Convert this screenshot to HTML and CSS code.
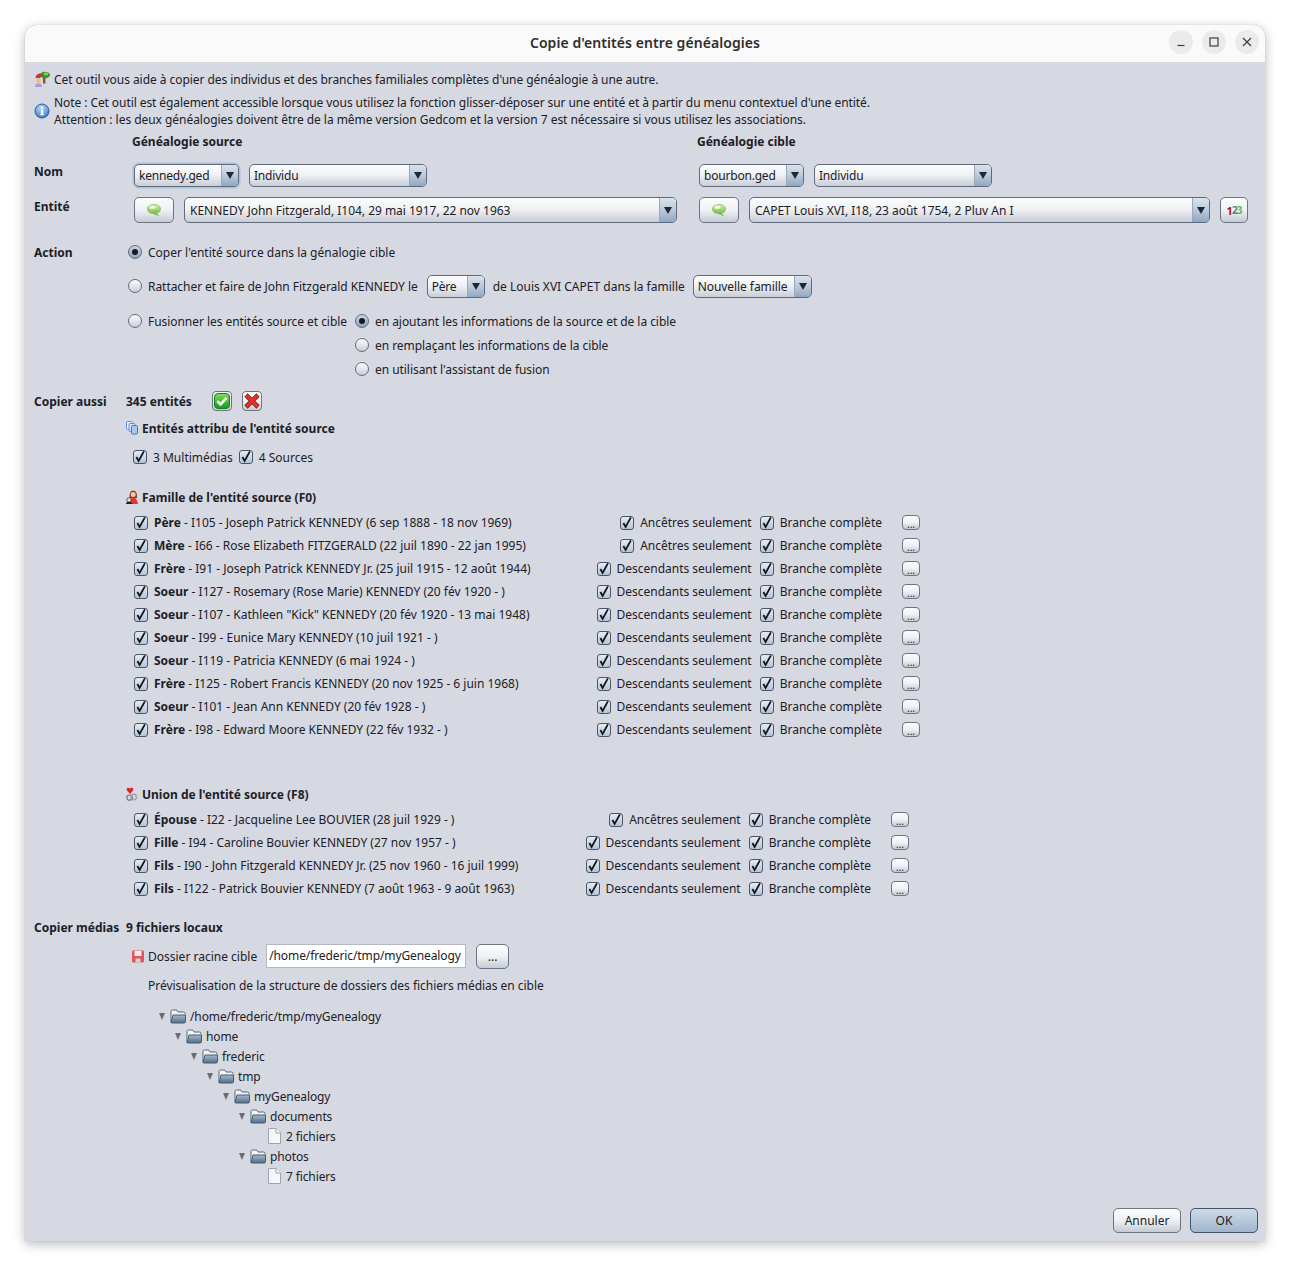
FILE: index.html
```html
<!DOCTYPE html>
<html lang="fr">
<head>
<meta charset="utf-8">
<title>Copie d'entités entre généalogies</title>
<link rel="stylesheet" href="styles.css">
</head>
<body>
<svg class="sprite" aria-hidden="true">
  <defs>
    <linearGradient id="gFolder" x1="0" y1="0" x2="0" y2="1"><stop offset="0" stop-color="#a9bccf"/><stop offset="1" stop-color="#4f6c8c"/></linearGradient>
    <linearGradient id="gGreen" x1="0" y1="0" x2="0" y2="1"><stop offset="0" stop-color="#7fe05a"/><stop offset="1" stop-color="#159a1c"/></linearGradient>
    <linearGradient id="gBubble" x1="0" y1="0" x2="0" y2="1"><stop offset="0" stop-color="#d5f0a8"/><stop offset="1" stop-color="#63b23a"/></linearGradient>
    <radialGradient id="gInfo" cx=".45" cy=".3" r=".75"><stop offset="0" stop-color="#c3dcf6"/><stop offset=".6" stop-color="#6d9fdc"/><stop offset="1" stop-color="#2f67b4"/></radialGradient>
    <symbol id="check" viewBox="0 0 14 14"><path d="M3.4 7 L5.6 11 L10.9 1.4" fill="none" stroke="#10151c" stroke-width="1.8"/></symbol>
    <symbol id="folder" viewBox="0 0 16 15"><path d="M1 13.5V2.5Q1 1 2.5 1H6Q7 1 7.5 2.2L8 3H13.5Q15 3 15 4.5V5.5" fill="#f2f4f7" stroke="#5d6875"/><path d="M1 13.5L3 6H15.5V12.5Q15.5 14 14 14H2Z" fill="url(#gFolder)" stroke="#4a5a6c"/></symbol>
    <symbol id="file" viewBox="0 0 14 16"><path d="M1.5 .5H9L13.5 5V15.5H1.5Z" fill="#f5f6f8" stroke="#9da3ad"/><path d="M9 .5V5H13.5" fill="#fff" stroke="#9da3ad"/></symbol>
    <symbol id="bubble" viewBox="0 0 14 12"><path d="M7 .5C10.5.5 13.5 2.2 13.5 5S11.5 9 9 9.2L11.5 11.5 6 9.5C3 9.3.5 8 .5 5S3.5.5 7 .5Z" fill="url(#gBubble)" stroke="#6db24b" stroke-width=".6"/><ellipse cx="5.5" cy="3.2" rx="3" ry="1.5" fill="#f2fbdf"/></symbol>
  </defs>
</svg>

<div class="window">
  <header class="titlebar">
    <h1 class="title">Copie d'entités entre généalogies</h1>
    <div class="winbtns">
      <span class="winbtn"><svg width="10" height="10" viewBox="0 0 10 10"><path d="M1.5 8.5H8.5" stroke="#3d3d3d" stroke-width="1.2"/></svg></span>
      <span class="winbtn"><svg width="10" height="10" viewBox="0 0 10 10"><rect x="1" y="1" width="8" height="8" fill="none" stroke="#3d3d3d" stroke-width="1.2"/></svg></span>
      <span class="winbtn"><svg width="10" height="10" viewBox="0 0 10 10"><path d="M1 1L9 9M9 1L1 9" stroke="#3d3d3d" stroke-width="1.2"/></svg></span>
    </div>
  </header>

  <main class="content">
    <div class="intro">
      <svg class="ico16" viewBox="0 0 16 16"><rect x="9" y="6.5" width="2.4" height="6" fill="#7a5a2c"/><ellipse cx="11" cy="4" rx="5" ry="3.3" fill="#3c8f2e"/><ellipse cx="12" cy="3" rx="2.4" ry="1.4" fill="#8acb5f"/><path d="M1.5 7Q2 2.5 6 2.5 8 2.6 8 4.5L6 7Z" fill="#c8362c"/><circle cx="4.5" cy="9.6" r="2.4" fill="#eeb98f"/><path d="M1 16Q1 12.2 4.5 12.2T8 16Z" fill="#b09ad0"/></svg>
      <span class="t-intro">Cet outil vous aide à copier des individus et des branches familiales complètes d'une généalogie à une autre.</span>
    </div>
    <div class="note">
      <svg class="ico16" viewBox="0 0 16 16"><circle cx="8" cy="8" r="7" fill="url(#gInfo)" stroke="#2f5f9e"/><rect x="7" y="6.8" width="2.2" height="5.2" fill="#fff"/><rect x="6.2" y="11" width="3.8" height="1.2" fill="#fff"/><circle cx="8" cy="4.6" r="1.2" fill="#fff"/></svg>
      <p class="note-text"><span class="t-note1">Note : Cet outil est également accessible lorsque vous utilisez la fonction glisser-déposer sur une entité et à partir du menu contextuel d'une entité.</span><span class="t-note2">Attention : les deux généalogies doivent être de la même version Gedcom et la version 7 est nécessaire si vous utilisez les associations.</span></p>
    </div>

    <div class="gen-heads">
      <b class="gen-head">Généalogie source</b>
      <b class="gen-head">Généalogie cible</b>
    </div>

    <div class="form-row nom-row">
      <b class="lbl lbl-up">Nom</b>
      <div class="side">
        <div class="combo w105 focus"><span class="combo-text">kennedy.ged</span><span class="combo-arrow"></span></div>
        <div class="combo w178"><span class="combo-text">Individu</span><span class="combo-arrow"></span></div>
      </div>
      <div class="side">
        <div class="combo w105"><span class="combo-text">bourbon.ged</span><span class="combo-arrow"></span></div>
        <div class="combo w178"><span class="combo-text">Individu</span><span class="combo-arrow"></span></div>
      </div>
    </div>

    <div class="form-row ent-row">
      <b class="lbl lbl-up">Entité</b>
      <div class="side">
        <button class="btn btn-ent"><svg width="14" height="12"><use href="#bubble"/></svg></button>
        <div class="combo tall w493"><span class="combo-text ent">KENNEDY John Fitzgerald, I104, 29 mai 1917, 22 nov 1963</span><span class="combo-arrow"></span></div>
      </div>
      <div class="side">
        <button class="btn btn-ent"><svg width="14" height="12"><use href="#bubble"/></svg></button>
        <div class="combo tall w461"><span class="combo-text ent">CAPET Louis XVI, I18, 23 août 1754, 2 Pluv An I</span><span class="combo-arrow"></span></div>
        <button class="btn btn-num"><span class="n1">1</span><span class="n2">2</span><span class="n3">3</span></button>
      </div>
    </div>

    <section class="action">
      <b class="lbl lbl-col lbl-action">Action</b>
      <div class="action-body">
        <div class="radio-row first"><span class="radio on"></span><span>Coper l'entité source dans la génalogie cible</span></div>
        <div class="radio-row second">
          <span class="radio"></span><span class="tight">Rattacher et faire de John Fitzgerald KENNEDY le</span>
          <div class="combo w58 after-text"><span class="combo-text">Père</span><span class="combo-arrow"></span></div>
          <span>de Louis XVI CAPET dans la famille</span>
          <div class="combo w119"><span class="combo-text loose">Nouvelle famille</span><span class="combo-arrow"></span></div>
        </div>
        <div class="merge">
          <div class="radio-row"><span class="radio"></span><span class="tight">Fusionner les entités source et cible</span></div>
          <div class="merge-opts">
            <div class="radio-row"><span class="radio on"></span><span class="tight">en ajoutant les informations de la source et de la cible</span></div>
            <div class="radio-row"><span class="radio"></span><span class="tight">en remplaçant les informations de la cible</span></div>
            <div class="radio-row"><span class="radio"></span><span class="tight">en utilisant l'assistant de fusion</span></div>
          </div>
        </div>
      </div>
    </section>

    <div class="copy-head">
      <b class="lbl lbl-col">Copier aussi</b>
      <b class="count">345 entités</b>
      <button class="btn btn-sq"><svg width="16" height="16" viewBox="0 0 16 16"><rect x=".5" y=".5" width="15" height="15" rx="3.5" fill="url(#gGreen)" stroke="#1b7f20"/><path d="M3.4 8.2L6.6 11.4 12.6 4.8" fill="none" stroke="#fff" stroke-width="2.6"/></svg></button>
      <button class="btn btn-sq"><svg width="16" height="16" viewBox="0 0 16 16"><path d="M2 2L14 14M14 2L2 14" stroke="#7d1713" stroke-width="4.6"/><path d="M2.4 2.4L13.6 13.6M13.6 2.4L2.4 13.6" stroke="#e0332b" stroke-width="3.2"/></svg></button>
    </div>

    <h2 class="group g-attr"><svg class="ico12" viewBox="0 0 12 14"><rect x=".5" y=".5" width="6" height="8" rx="1" fill="#e4eefc" stroke="#5f93d8"/><rect x="3" y="2.5" width="6" height="8" rx="1" fill="#d3e3f9" stroke="#5f93d8"/><rect x="5.5" y="4.5" width="6" height="8.5" rx="1" fill="#a9c8f0" stroke="#3f78c6"/></svg>Entités attribu de l'entité source</h2>
    <div class="attr-row">
      <label class="chk"><span class="cb"><svg width="14" height="14"><use href="#check"/></svg></span>3 Multimédias</label>
      <label class="chk"><span class="cb"><svg width="14" height="14"><use href="#check"/></svg></span>4 Sources</label>
    </div>

    <h2 class="group g-fam"><svg class="ico12" viewBox="0 0 12 14"><path d="M3.6 8Q3 .5 7.2.5T11 8Z" fill="#8f3a22"/><circle cx="7.2" cy="4.4" r="2.5" fill="#f3c9a6"/><path d="M4 14Q4 7.5 7.4 7.5T12 14Z" fill="#e0362c"/><circle cx="3" cy="10" r="2.2" fill="#fbe3d6" stroke="#2c2020" stroke-width=".7"/><path d="M0 14Q0 11.8 3 11.8T6 14Z" fill="#2a1d1d"/></svg>Famille de l'entité source (F0)</h2>
    <div class="people">
      <div class="person"><label class="chk"><span class="cb"><svg width="14" height="14"><use href="#check"/></svg></span><span><b>Père</b> - I105 - Joseph Patrick KENNEDY (6 sep 1888 - 18 nov 1969)</span></label><label class="chk scope"><span class="cb"><svg width="14" height="14"><use href="#check"/></svg></span>Ancêtres seulement</label><label class="chk branch"><span class="cb"><svg width="14" height="14"><use href="#check"/></svg></span>Branche complète</label><button class="btn btn-more">...</button></div>
      <div class="person"><label class="chk"><span class="cb"><svg width="14" height="14"><use href="#check"/></svg></span><span><b>Mère</b> - I66 - Rose Elizabeth FITZGERALD (22 juil 1890 - 22 jan 1995)</span></label><label class="chk scope"><span class="cb"><svg width="14" height="14"><use href="#check"/></svg></span>Ancêtres seulement</label><label class="chk branch"><span class="cb"><svg width="14" height="14"><use href="#check"/></svg></span>Branche complète</label><button class="btn btn-more">...</button></div>
      <div class="person"><label class="chk"><span class="cb"><svg width="14" height="14"><use href="#check"/></svg></span><span><b>Frère</b> - I91 - Joseph Patrick KENNEDY Jr. (25 juil 1915 - 12 août 1944)</span></label><label class="chk scope"><span class="cb"><svg width="14" height="14"><use href="#check"/></svg></span>Descendants seulement</label><label class="chk branch"><span class="cb"><svg width="14" height="14"><use href="#check"/></svg></span>Branche complète</label><button class="btn btn-more">...</button></div>
      <div class="person"><label class="chk"><span class="cb"><svg width="14" height="14"><use href="#check"/></svg></span><span><b>Soeur</b> - I127 - Rosemary (Rose Marie) KENNEDY (20 fév 1920 - )</span></label><label class="chk scope"><span class="cb"><svg width="14" height="14"><use href="#check"/></svg></span>Descendants seulement</label><label class="chk branch"><span class="cb"><svg width="14" height="14"><use href="#check"/></svg></span>Branche complète</label><button class="btn btn-more">...</button></div>
      <div class="person"><label class="chk"><span class="cb"><svg width="14" height="14"><use href="#check"/></svg></span><span><b>Soeur</b> - I107 - Kathleen "Kick" KENNEDY (20 fév 1920 - 13 mai 1948)</span></label><label class="chk scope"><span class="cb"><svg width="14" height="14"><use href="#check"/></svg></span>Descendants seulement</label><label class="chk branch"><span class="cb"><svg width="14" height="14"><use href="#check"/></svg></span>Branche complète</label><button class="btn btn-more">...</button></div>
      <div class="person"><label class="chk"><span class="cb"><svg width="14" height="14"><use href="#check"/></svg></span><span><b>Soeur</b> - I99 - Eunice Mary KENNEDY (10 juil 1921 - )</span></label><label class="chk scope"><span class="cb"><svg width="14" height="14"><use href="#check"/></svg></span>Descendants seulement</label><label class="chk branch"><span class="cb"><svg width="14" height="14"><use href="#check"/></svg></span>Branche complète</label><button class="btn btn-more">...</button></div>
      <div class="person"><label class="chk"><span class="cb"><svg width="14" height="14"><use href="#check"/></svg></span><span><b>Soeur</b> - I119 - Patricia KENNEDY (6 mai 1924 - )</span></label><label class="chk scope"><span class="cb"><svg width="14" height="14"><use href="#check"/></svg></span>Descendants seulement</label><label class="chk branch"><span class="cb"><svg width="14" height="14"><use href="#check"/></svg></span>Branche complète</label><button class="btn btn-more">...</button></div>
      <div class="person"><label class="chk"><span class="cb"><svg width="14" height="14"><use href="#check"/></svg></span><span><b>Frère</b> - I125 - Robert Francis KENNEDY (20 nov 1925 - 6 juin 1968)</span></label><label class="chk scope"><span class="cb"><svg width="14" height="14"><use href="#check"/></svg></span>Descendants seulement</label><label class="chk branch"><span class="cb"><svg width="14" height="14"><use href="#check"/></svg></span>Branche complète</label><button class="btn btn-more">...</button></div>
      <div class="person"><label class="chk"><span class="cb"><svg width="14" height="14"><use href="#check"/></svg></span><span><b>Soeur</b> - I101 - Jean Ann KENNEDY (20 fév 1928 - )</span></label><label class="chk scope"><span class="cb"><svg width="14" height="14"><use href="#check"/></svg></span>Descendants seulement</label><label class="chk branch"><span class="cb"><svg width="14" height="14"><use href="#check"/></svg></span>Branche complète</label><button class="btn btn-more">...</button></div>
      <div class="person"><label class="chk"><span class="cb"><svg width="14" height="14"><use href="#check"/></svg></span><span><b>Frère</b> - I98 - Edward Moore KENNEDY (22 fév 1932 - )</span></label><label class="chk scope"><span class="cb"><svg width="14" height="14"><use href="#check"/></svg></span>Descendants seulement</label><label class="chk branch"><span class="cb"><svg width="14" height="14"><use href="#check"/></svg></span>Branche complète</label><button class="btn btn-more">...</button></div>
    </div>

    <h2 class="group g-union"><svg class="ico12" viewBox="0 0 12 14"><path d="M4 7L1 3.6Q0 1.2 2 .8 3.4.5 4 1.8 4.6.5 6 .8 8 1.2 7 3.6Z" fill="#e0232b"/><ellipse cx="3.6" cy="10.6" rx="2.8" ry="2.6" fill="none" stroke="#6f7682" stroke-width="1.2"/><ellipse cx="7.6" cy="10" rx="2.8" ry="2.8" fill="none" stroke="#9a9fa8" stroke-width="1.2"/></svg>Union de l'entité source (F8)</h2>
    <div class="people narrow">
      <div class="person"><label class="chk"><span class="cb"><svg width="14" height="14"><use href="#check"/></svg></span><span><b>Épouse</b> - I22 - Jacqueline Lee BOUVIER (28 juil 1929 - )</span></label><label class="chk scope"><span class="cb"><svg width="14" height="14"><use href="#check"/></svg></span>Ancêtres seulement</label><label class="chk branch"><span class="cb"><svg width="14" height="14"><use href="#check"/></svg></span>Branche complète</label><button class="btn btn-more">...</button></div>
      <div class="person"><label class="chk"><span class="cb"><svg width="14" height="14"><use href="#check"/></svg></span><span><b>Fille</b> - I94 - Caroline Bouvier KENNEDY (27 nov 1957 - )</span></label><label class="chk scope"><span class="cb"><svg width="14" height="14"><use href="#check"/></svg></span>Descendants seulement</label><label class="chk branch"><span class="cb"><svg width="14" height="14"><use href="#check"/></svg></span>Branche complète</label><button class="btn btn-more">...</button></div>
      <div class="person"><label class="chk"><span class="cb"><svg width="14" height="14"><use href="#check"/></svg></span><span><b>Fils</b> - I90 - John Fitzgerald KENNEDY Jr. (25 nov 1960 - 16 juil 1999)</span></label><label class="chk scope"><span class="cb"><svg width="14" height="14"><use href="#check"/></svg></span>Descendants seulement</label><label class="chk branch"><span class="cb"><svg width="14" height="14"><use href="#check"/></svg></span>Branche complète</label><button class="btn btn-more">...</button></div>
      <div class="person"><label class="chk"><span class="cb"><svg width="14" height="14"><use href="#check"/></svg></span><span><b>Fils</b> - I122 - Patrick Bouvier KENNEDY (7 août 1963 - 9 août 1963)</span></label><label class="chk scope"><span class="cb"><svg width="14" height="14"><use href="#check"/></svg></span>Descendants seulement</label><label class="chk branch"><span class="cb"><svg width="14" height="14"><use href="#check"/></svg></span>Branche complète</label><button class="btn btn-more">...</button></div>
    </div>

    <div class="media-head">
      <b class="lbl lbl-col">Copier médias</b>
      <b class="count">9 fichiers locaux</b>
    </div>
    <div class="folder-row">
      <svg class="ico12" viewBox="0 0 12 14"><path d="M0 2.5Q0 1.5 1 1.5H11Q12 1.5 12 2.5V12.5Q12 13.5 11 13.5H1Q0 13.5 0 12.5Z" fill="#e2555c"/><rect x="2.5" y="2" width="7" height="5" fill="#fbeeee"/><rect x="3.5" y="9.5" width="5" height="4" fill="#cfd2da"/></svg>
      <span class="t-dossier">Dossier racine cible</span>
      <span class="path-input">/home/frederic/tmp/myGenealogy</span>
      <button class="btn btn-browse">...</button>
    </div>
    <p class="preview">Prévisualisation de la structure de dossiers des fichiers médias en cible</p>

    <ul class="tree root">
      <li><div class="node"><span class="twist"></span><svg class="folder" viewBox="0 0 16 15"><use href="#folder"/></svg>/home/frederic/tmp/myGenealogy</div>
        <ul class="tree"><li><div class="node"><span class="twist"></span><svg class="folder" viewBox="0 0 16 15"><use href="#folder"/></svg>home</div>
          <ul class="tree"><li><div class="node"><span class="twist"></span><svg class="folder" viewBox="0 0 16 15"><use href="#folder"/></svg>frederic</div>
            <ul class="tree"><li><div class="node"><span class="twist"></span><svg class="folder" viewBox="0 0 16 15"><use href="#folder"/></svg>tmp</div>
              <ul class="tree"><li><div class="node"><span class="twist"></span><svg class="folder" viewBox="0 0 16 15"><use href="#folder"/></svg>myGenealogy</div>
                <ul class="tree">
                  <li><div class="node"><span class="twist"></span><svg class="folder" viewBox="0 0 16 15"><use href="#folder"/></svg>documents</div>
                    <ul class="tree"><li><div class="node"><span class="twist none"></span><svg class="file" viewBox="0 0 14 16"><use href="#file"/></svg>2 fichiers</div></li></ul>
                  </li>
                  <li><div class="node"><span class="twist"></span><svg class="folder" viewBox="0 0 16 15"><use href="#folder"/></svg>photos</div>
                    <ul class="tree"><li><div class="node"><span class="twist none"></span><svg class="file" viewBox="0 0 14 16"><use href="#file"/></svg>7 fichiers</div></li></ul>
                  </li>
                </ul>
              </li></ul>
            </li></ul>
          </li></ul>
        </li></ul>
      </li>
    </ul>
  </main>

  <footer class="footer">
    <button class="btn btn-foot">Annuler</button>
    <button class="btn btn-foot btn-default">OK</button>
  </footer>
</div>
</body>
</html>
```

FILE: styles.css
```css
* { box-sizing: border-box; }
html, body { margin: 0; height: 100%; }
body {
  background: #fff;
  padding: 25px 25px 24px;
  font-family: "Noto Sans", sans-serif;
  font-size: 12px;
  color: #1c2027;
  overflow: hidden;
}
.sprite { position: absolute; width: 0; height: 0; }
b { font-weight: 700; }
p, h1, h2, ul { margin: 0; padding: 0; }

.window {
  width: 1240px;
  height: 1216px;
  display: flex;
  flex-direction: column;
  background: #d6d9e1;
  border-radius: 12px 12px 0 0;
  box-shadow: 0 3px 12px rgba(0,0,0,.28), 0 0 1px rgba(0,0,0,.3);
}

.titlebar {
  height: 37px;
  flex: none;
  display: flex;
  align-items: center;
  justify-content: center;
  background: #fafafa;
  border-radius: 12px 12px 0 0;
  padding: 0 6px 2px;
  position: relative;
}
.title { font-size: 14px; font-weight: 600; color: #2e2e2e; letter-spacing: .07px; }
.winbtns { position: absolute; right: 6px; top: 5px; display: flex; gap: 9px; }
.winbtn { width: 24px; height: 24px; border-radius: 50%; background: #ebebeb; display: flex; align-items: center; justify-content: center; }

.content { flex: 1; padding: 8px 0 0 9px; }

.ico16 { width: 16px; height: 16px; flex: none; }
.ico12 { width: 12px; height: 14px; flex: none; }

.intro { display: flex; align-items: center; gap: 4px; height: 18px; white-space: nowrap; }
.t-intro { letter-spacing: -.055px; }
.note { display: flex; align-items: center; gap: 4px; margin-top: 6px; height: 34px; white-space: nowrap; }
.note-text { line-height: 17px; }
.t-note1, .t-note2 { display: block; }
.t-note1 { letter-spacing: -.08px; }
.t-note2 { letter-spacing: -.04px; }

.gen-heads { display: flex; margin-top: 5px; height: 18px; line-height: 18px; padding-left: 98px; }
.gen-head { width: 565px; }

.form-row { display: flex; align-items: center; }
.nom-row { margin-top: 13px; height: 23px; }
.ent-row { margin-top: 10px; height: 26px; }
.lbl { display: block; width: 100px; flex: none; }
.lbl-up { padding-bottom: 8px; }
.lbl-col { width: 92px; }
.lbl-action { line-height: 26px; }
.side { width: 565px; flex: none; display: flex; align-items: center; gap: 10px; height: 100%; }

.combo {
  height: 23px;
  flex: none;
  display: flex;
  border: 1px solid #5f6a7c;
  border-radius: 5px;
  background: linear-gradient(#fbfcfd, #f0f2f5 45%, #c9cdd7);
  overflow: hidden;
}
.combo.tall { height: 26px; }
.combo.focus { box-shadow: 0 0 0 1.5px #a8c1dd; }
.combo-text { flex: 1; padding-left: 4px; line-height: 21px; white-space: nowrap; overflow: hidden; letter-spacing: -.2px; }
.combo-text.loose { letter-spacing: -.07px; }
.tall .combo-text { line-height: 26px; letter-spacing: -.02px; }
.combo-text.ent { padding-left: 5px; }
.combo-arrow {
  width: 17px;
  flex: none;
  display: flex;
  align-items: center;
  justify-content: center;
  border-left: 1px solid #9aa9bb;
  background: linear-gradient(#dbe3ec, #b9c9da 50%, #8fa8c0);
}
.combo-arrow::after {
  content: "";
  border-left: 4px solid transparent;
  border-right: 4px solid transparent;
  border-top: 7px solid #1f2733;
}
.w105 { width: 105px; }
.w178 { width: 178px; }
.w493 { width: 493px; }
.w461 { width: 461px; }
.w58 { width: 58px; }
.w119 { width: 119px; }
.after-text { margin-left: 1px; }

.btn {
  font: inherit;
  color: inherit;
  padding: 0;
  border: 1px solid #6d7482;
  border-radius: 5px;
  background: linear-gradient(#fbfcfd, #eff1f4 50%, #c6cad4);
  display: flex;
  align-items: center;
  justify-content: center;
  flex: none;
}
.btn-ent { width: 40px; height: 26px; }
.btn-num { width: 28px; height: 26px; font-size: 10px; font-weight: 700; letter-spacing: -1px; }
.n1 { color: #a3171a; font-size: 11px; }
.n2 { color: #3f8e8a; }
.n3 { color: #6eb43f; }

.action { display: flex; margin-top: 17px; }
.action-body { padding-left: 2px; }
.tight { letter-spacing: -.05px; }
.radio-row { display: flex; align-items: center; gap: 6px; height: 24px; white-space: nowrap; }
.radio-row.second { margin-top: 10px; gap: 8px; }
.radio-row.second .radio { margin-right: -2px; }
.merge { display: flex; gap: 8px; margin-top: 11px; }
.radio {
  width: 14px;
  height: 14px;
  flex: none;
  border-radius: 50%;
  border: 1px solid #636b78;
  background: linear-gradient(#fdfdfe, #c9cdd6);
  display: flex;
  align-items: center;
  justify-content: center;
}
.radio.on { background: linear-gradient(#c9d6e4, #8da4bc); }
.radio.on::after { content: ""; width: 6px; height: 6px; border-radius: 50%; background: #141a22; }

.copy-head { display: flex; align-items: center; margin-top: 8px; height: 24px; }
.count { display: block; }
.copy-head .count { width: 86px; }
.btn-sq { width: 20px; height: 20px; margin-right: 10px; border-radius: 4px; }

.group { display: flex; align-items: center; gap: 4px; font-size: 12px; font-weight: 700; height: 18px; padding-left: 0; margin-left: 92px; }
.g-attr { margin-top: 6px; }
.g-fam { margin-top: 22px; }
.g-union { margin-top: 44px; }

.attr-row { display: flex; gap: 6px; margin: 11px 0 0 99px; height: 18px; }
.chk { display: flex; align-items: center; gap: 6px; white-space: nowrap; }
.cb {
  width: 14px;
  height: 14px;
  flex: none;
  display: block;
  border: 1px solid #4b5564;
  border-radius: 3px;
  background: linear-gradient(#e6ebf2, #b4c5d8);
  position: relative;
}
.cb svg { display: block; margin: -1px; }

.people { margin: 5px 0 0 100px; width: 786px; }
.people.narrow { width: 775px; }
.person { display: flex; align-items: center; height: 23px; }
.person > .chk:first-child { flex: 1; }
.scope { margin-right: 8px; letter-spacing: -.02px; }
.branch { margin-right: 20px; }
.btn-more { width: 18px; height: 15px; font-size: 10px; line-height: 10px; border-radius: 4px; align-items: flex-end; }

.media-head { display: flex; align-items: center; margin-top: 18px; height: 18px; }
.folder-row { display: flex; align-items: center; margin: 8px 0 0 98px; height: 24px; gap: 4px; }
.path-input {
  width: 200px;
  height: 24px;
  margin-left: 5px;
  padding-left: 2px;
  line-height: 22px;
  letter-spacing: -.1px;
  background: #fff;
  border: 1px solid #b4b8c1;
  white-space: nowrap;
  overflow: hidden;
}
.btn-browse { width: 33px; height: 25px; margin-left: 6px; }
.preview { margin: 9px 0 0 114px; height: 18px; line-height: 18px; letter-spacing: -.03px; }

.tree { list-style: none; padding-left: 16px; }
.tree.root { padding-left: 123px; margin-top: 11px; }
.node { display: flex; align-items: center; height: 20px; white-space: nowrap; letter-spacing: -.12px; }
.twist { width: 9px; flex: none; margin-right: 4px; display: flex; justify-content: center; }
.twist::after {
  content: "";
  border-left: 3.5px solid transparent;
  border-right: 3.5px solid transparent;
  border-top: 7px solid #6a6d73;
}
.twist.none::after { display: none; }
.folder { width: 16px; height: 15px; margin-right: 4px; flex: none; }
.file { width: 14px; height: 16px; margin: 0 5px 0 1px; flex: none; }

.footer { flex: none; display: flex; justify-content: flex-end; gap: 9px; padding: 0 7px 8px 0; }
.btn-foot { width: 68px; height: 25px; }
.btn-default { background: linear-gradient(#cfdbe7, #b8c9da 50%, #9fb5cb); border-color: #3f566e; }
```
